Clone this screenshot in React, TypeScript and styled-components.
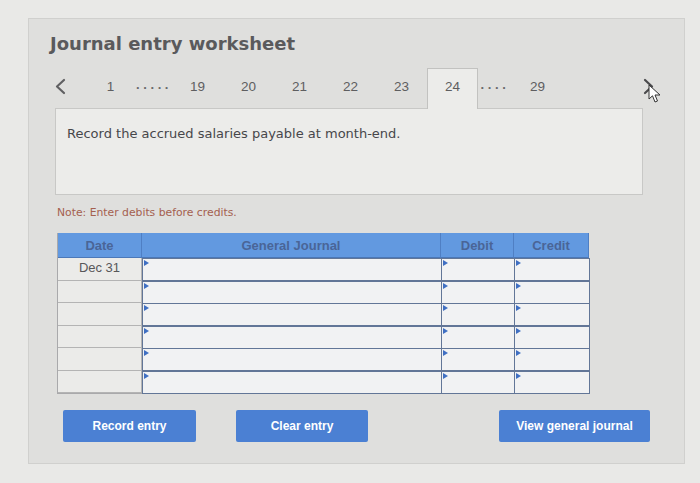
import React from "react";
import styled, { createGlobalStyle } from "styled-components";

const Global = createGlobalStyle`
  html, body { margin: 0; padding: 0; background: #e9e9e7; }
  body { width: 700px; height: 483px; overflow: hidden; }
`;

const Page = styled.div`
  padding: 18px 0 0 28px;
`;

const Panel = styled.div`
  box-sizing: border-box;
  width: 657px;
  height: 446px;
  background: #dfdfdd;
  border: 1px solid #d0d0ce;
  padding: 14px 0 0 21px;
  display: flex;
  flex-direction: column;
`;

const Title = styled.h1`
  margin: 0;
  font-family: "DejaVu Sans", Verdana, sans-serif;
  font-weight: bold;
  font-size: 18px;
  line-height: 22px;
  color: #5a5a5c;
`;

const Nav = styled.div`
  position: relative;
  margin-top: 13px;
  height: 40px;
  display: flex;
  align-items: stretch;
  font-family: "Liberation Sans", Arial, sans-serif;
  font-size: 13.5px;
  color: #5e5e60;
  z-index: 1;
`;

const Arrow = styled.div<{ $right?: boolean }>`
  width: 35px;
  display: flex;
  align-items: flex-start;
  padding-top: 10px;
  padding-left: ${(p) => (p.$right ? "0" : "5px")};
  box-sizing: border-box;
  ${(p) => (p.$right ? "margin-left: auto; margin-right: 21px; width: 20px;" : "")}
`;

const Tab = styled.div<{ $active?: boolean }>`
  width: 51px;
  box-sizing: border-box;
  text-align: center;
  padding-top: ${(p) => (p.$active ? "10px" : "11px")};
  ${(p) =>
    p.$active
      ? `background: #ececea;
         border: 1px solid #c2c2c0;
         border-bottom: none;
         margin-bottom: -1px;`
      : ""}
`;

const Dots = styled.div<{ $w: number }>`
  width: ${(p) => p.$w}px;
  text-align: center;
  padding-top: 9px;
  font-weight: bold;
  letter-spacing: 3.6px;
  font-size: 13px;
  color: #6a6a6c;
`;

const QuestionBox = styled.div`
  box-sizing: border-box;
  margin-left: 5px;
  width: 588px;
  height: 87px;
  background: #ececea;
  border: 1px solid #c8c8c6;
  padding: 16px 0 0 11px;
  font-family: "DejaVu Sans", Verdana, sans-serif;
  font-size: 13px;
  line-height: 18px;
  color: #47474a;
`;

const Note = styled.p`
  margin: 11px 0 0 7px;
  font-family: "DejaVu Sans", Verdana, sans-serif;
  font-size: 10.8px;
  line-height: 14px;
  color: #a4604f;
`;

const Grid = styled.div`
  margin: 13px 0 0 7px;
  width: 531px;
  display: grid;
  grid-template-columns: 84px 299px 73px 75px;
  grid-template-rows: 25px repeat(6, 22.5px);
  border: 1px solid #a9a9ab;
  border-top: none;
  box-sizing: border-box;
  font-family: "Liberation Sans", Arial, sans-serif;
  font-size: 13px;
`;

const Head = styled.div`
  background: #6299e0;
  color: #4a6597;
  font-weight: bold;
  display: flex;
  align-items: center;
  justify-content: center;
  border-right: 1px solid #4f7fc4;
  border-bottom: 1px solid #4b78b8;
  &:last-of-type { border-right: none; }
`;

const DateCell = styled.div`
  background: #ebebe9;
  border-bottom: 1px solid #b4b4b4;
  border-right: 1px solid #b4b4b4;
  color: #575759;
  display: flex;
  align-items: center;
  justify-content: center;
  padding-bottom: 2px;
  box-sizing: border-box;
`;

const InputCell = styled.div`
  position: relative;
  box-sizing: border-box;
  background: #f1f2f3;
  border: 1.5px solid #627697;
  margin: 0 -0.5px -0.5px 0;
  &::before {
    content: "";
    position: absolute;
    top: 1px;
    left: 1px;
    border-top: 3px solid transparent;
    border-bottom: 3px solid transparent;
    border-left: 5px solid #3f6fc2;
  }
`;

const Buttons = styled.div`
  margin: 16px 0 0 13px;
  width: 587px;
  display: flex;
  gap: 40px;
`;

const Button = styled.button<{ $w: number; $push?: boolean }>`
  width: ${(p) => p.$w}px;
  height: 32px;
  border: none;
  border-radius: 2px;
  background: #4b80d3;
  color: #ffffff;
  font-family: "Liberation Sans", Arial, sans-serif;
  font-weight: bold;
  font-size: 12px;
  padding: 0;
  ${(p) => (p.$push ? "margin-left: auto;" : "")}
`;

const Cursor = styled.svg`
  position: absolute;
  left: 598px;
  top: 16px;
`;

const Chevron = ({ right }: { right?: boolean }) => (
  <svg width="11" height="17" viewBox="0 0 11 17">
    <path
      d={right ? "M2 2 L9 8.5 L2 15" : "M9 2 L2 8.5 L9 15"}
      fill="none"
      stroke={right ? "#4a4a4c" : "#606062"}
      strokeWidth="2.2"
      strokeLinecap="round"
      strokeLinejoin="round"
    />
  </svg>
);

const rows = ["Dec 31", "", "", "", "", ""];

export default function App() {
  return (
    <>
      <Global />
      <Page>
        <Panel>
          <Title>Journal entry worksheet</Title>
          <Nav>
            <Arrow>
              <Chevron />
            </Arrow>
            <Tab>1</Tab>
            <Dots $w={36}>.....</Dots>
            <Tab>19</Tab>
            <Tab>20</Tab>
            <Tab>21</Tab>
            <Tab>22</Tab>
            <Tab>23</Tab>
            <Tab $active>24</Tab>
            <Dots $w={34}>....</Dots>
            <Tab>29</Tab>
            <Arrow $right>
              <Chevron right />
            </Arrow>
            <Cursor width="14" height="20" viewBox="0 0 14 20">
              <path
                d="M1 1 L1 15 L4.5 11.8 L7 18 L9.5 17 L7 11 L12 11 Z"
                fill="#ffffff"
                stroke="#333"
                strokeWidth="1"
                strokeLinejoin="round"
              />
            </Cursor>
          </Nav>
          <QuestionBox>Record the accrued salaries payable at month-end.</QuestionBox>
          <Note>Note: Enter debits before credits.</Note>
          <Grid>
            <Head>Date</Head>
            <Head>General Journal</Head>
            <Head>Debit</Head>
            <Head>Credit</Head>
            {rows.map((d, i) => (
              <React.Fragment key={i}>
                <DateCell>{d}</DateCell>
                <InputCell />
                <InputCell />
                <InputCell />
              </React.Fragment>
            ))}
          </Grid>
          <Buttons>
            <Button $w={133}>Record entry</Button>
            <Button $w={132}>Clear entry</Button>
            <Button $w={151} $push>
              View general journal
            </Button>
          </Buttons>
        </Panel>
      </Page>
    </>
  );
}
